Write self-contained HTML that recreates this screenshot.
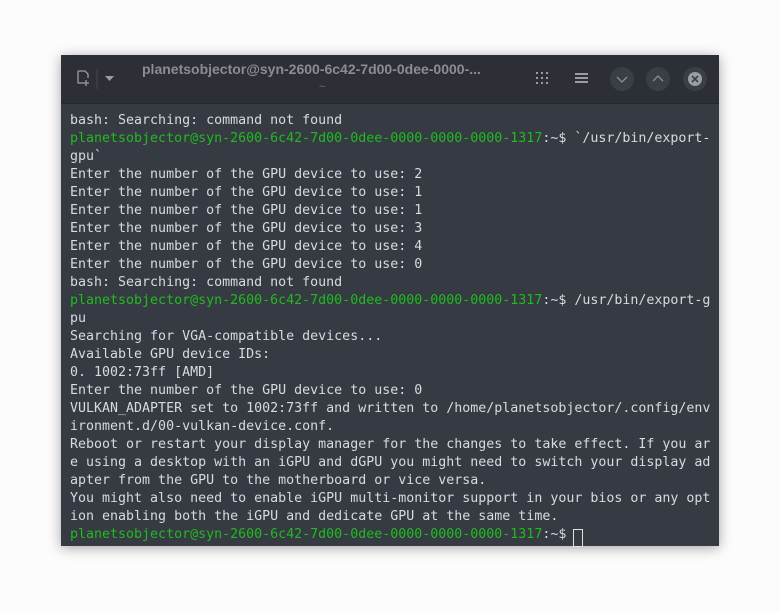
<!DOCTYPE html>
<html><head><style>
body{margin:0;background:#fcfcfc;width:780px;height:613px;position:relative;overflow:hidden}
.win{position:absolute;left:61px;top:55px;width:658px;height:491px;background:#363a42;box-shadow:0 2px 12px rgba(0,0,0,.35)}
.tb{position:absolute;left:0;top:0;width:658px;height:48px;background:#2c2f36;border-bottom:1px solid #25272c}
.title{position:absolute;left:81px;top:6px;font:bold 14px "Liberation Sans",sans-serif;color:#8a8d93}
.tilde{position:absolute;left:258px;top:26px;font:11px "Liberation Sans",sans-serif;color:#6f7278}
.term{position:absolute;left:9px;top:57px;font:13.3px "DejaVu Sans Mono",monospace;line-height:18px;color:#d8dadd;white-space:pre}
.g{color:#1fbb1f}
.cur{display:inline-block;width:8px;height:16px;border:1px solid #e0e0e0;vertical-align:-4px;margin-left:-1px}
.btn{position:absolute;top:12px;width:24px;height:24px;border-radius:12px;background:#3a3e46}
</style></head><body>
<div class="win">
<div class="tb">
<svg style="position:absolute;left:14px;top:14px" width="64" height="20" viewBox="0 0 64 20">
<path d="M3 2h7l3 3v4M3 2v12h5M11 11v6M8 14h6" stroke="#9a9da3" stroke-width="1.3" fill="none"/>
<line x1="22" y1="0" x2="22" y2="20" stroke="#464a52"/>
<path d="M30 7h9l-4.5 5z" fill="#9a9da3"/>
</svg>
<div class="title">planetsobjector@syn-2600-6c42-7d00-0dee-0000-...</div>
<div class="tilde">~</div>
<svg style="position:absolute;left:474px;top:16px" width="16" height="16"><g fill="#9a9da3"><rect x="1" y="1" width="2" height="2"/><rect x="6" y="1" width="2" height="2"/><rect x="11" y="1" width="2" height="2"/><rect x="1" y="6" width="2" height="2"/><rect x="6" y="6" width="2" height="2"/><rect x="11" y="6" width="2" height="2"/><rect x="1" y="11" width="2" height="2"/><rect x="6" y="11" width="2" height="2"/><rect x="11" y="11" width="2" height="2"/></g></svg>
<svg style="position:absolute;left:514px;top:17px" width="14" height="14"><g fill="#9a9da3"><rect y="1" width="13" height="2"/><rect y="5" width="13" height="2"/><rect y="9" width="13" height="2"/></g></svg>
<div class="btn" style="left:549px"><svg width="24" height="24"><path d="M7 10l5 5 5-5" stroke="#8a8d93" fill="none" stroke-width="1.3"/></svg></div>
<div class="btn" style="left:585px"><svg width="24" height="24"><path d="M7 14l5-5 5 5" stroke="#8a8d93" fill="none" stroke-width="1.3"/></svg></div>
<div class="btn" style="left:622px"><svg width="24" height="24"><circle cx="12" cy="12" r="7" fill="#9a9da3"/><path d="M9 9l6 6M15 9l-6 6" stroke="#3a3e46" stroke-width="1.6"/></svg></div>
</div>
<div class="term">bash: Searching: command not found
<span class="g">planetsobjector@syn-2600-6c42-7d00-0dee-0000-0000-0000-1317</span>:~$ `/usr/bin/export-
gpu`
Enter the number of the GPU device to use: 2
Enter the number of the GPU device to use: 1
Enter the number of the GPU device to use: 1
Enter the number of the GPU device to use: 3
Enter the number of the GPU device to use: 4
Enter the number of the GPU device to use: 0
bash: Searching: command not found
<span class="g">planetsobjector@syn-2600-6c42-7d00-0dee-0000-0000-0000-1317</span>:~$ /usr/bin/export-g
pu
Searching for VGA-compatible devices...
Available GPU device IDs:
0. 1002:73ff [AMD]
Enter the number of the GPU device to use: 0
VULKAN_ADAPTER set to 1002:73ff and written to /home/planetsobjector/.config/env
ironment.d/00-vulkan-device.conf.
Reboot or restart your display manager for the changes to take effect. If you ar
e using a desktop with an iGPU and dGPU you might need to switch your display ad
apter from the GPU to the motherboard or vice versa.
You might also need to enable iGPU multi-monitor support in your bios or any opt
ion enabling both the iGPU and dedicate GPU at the same time.
<span class="g">planetsobjector@syn-2600-6c42-7d00-0dee-0000-0000-0000-1317</span>:~$ <span class="cur"> </span></div>
</div>
</body></html>
